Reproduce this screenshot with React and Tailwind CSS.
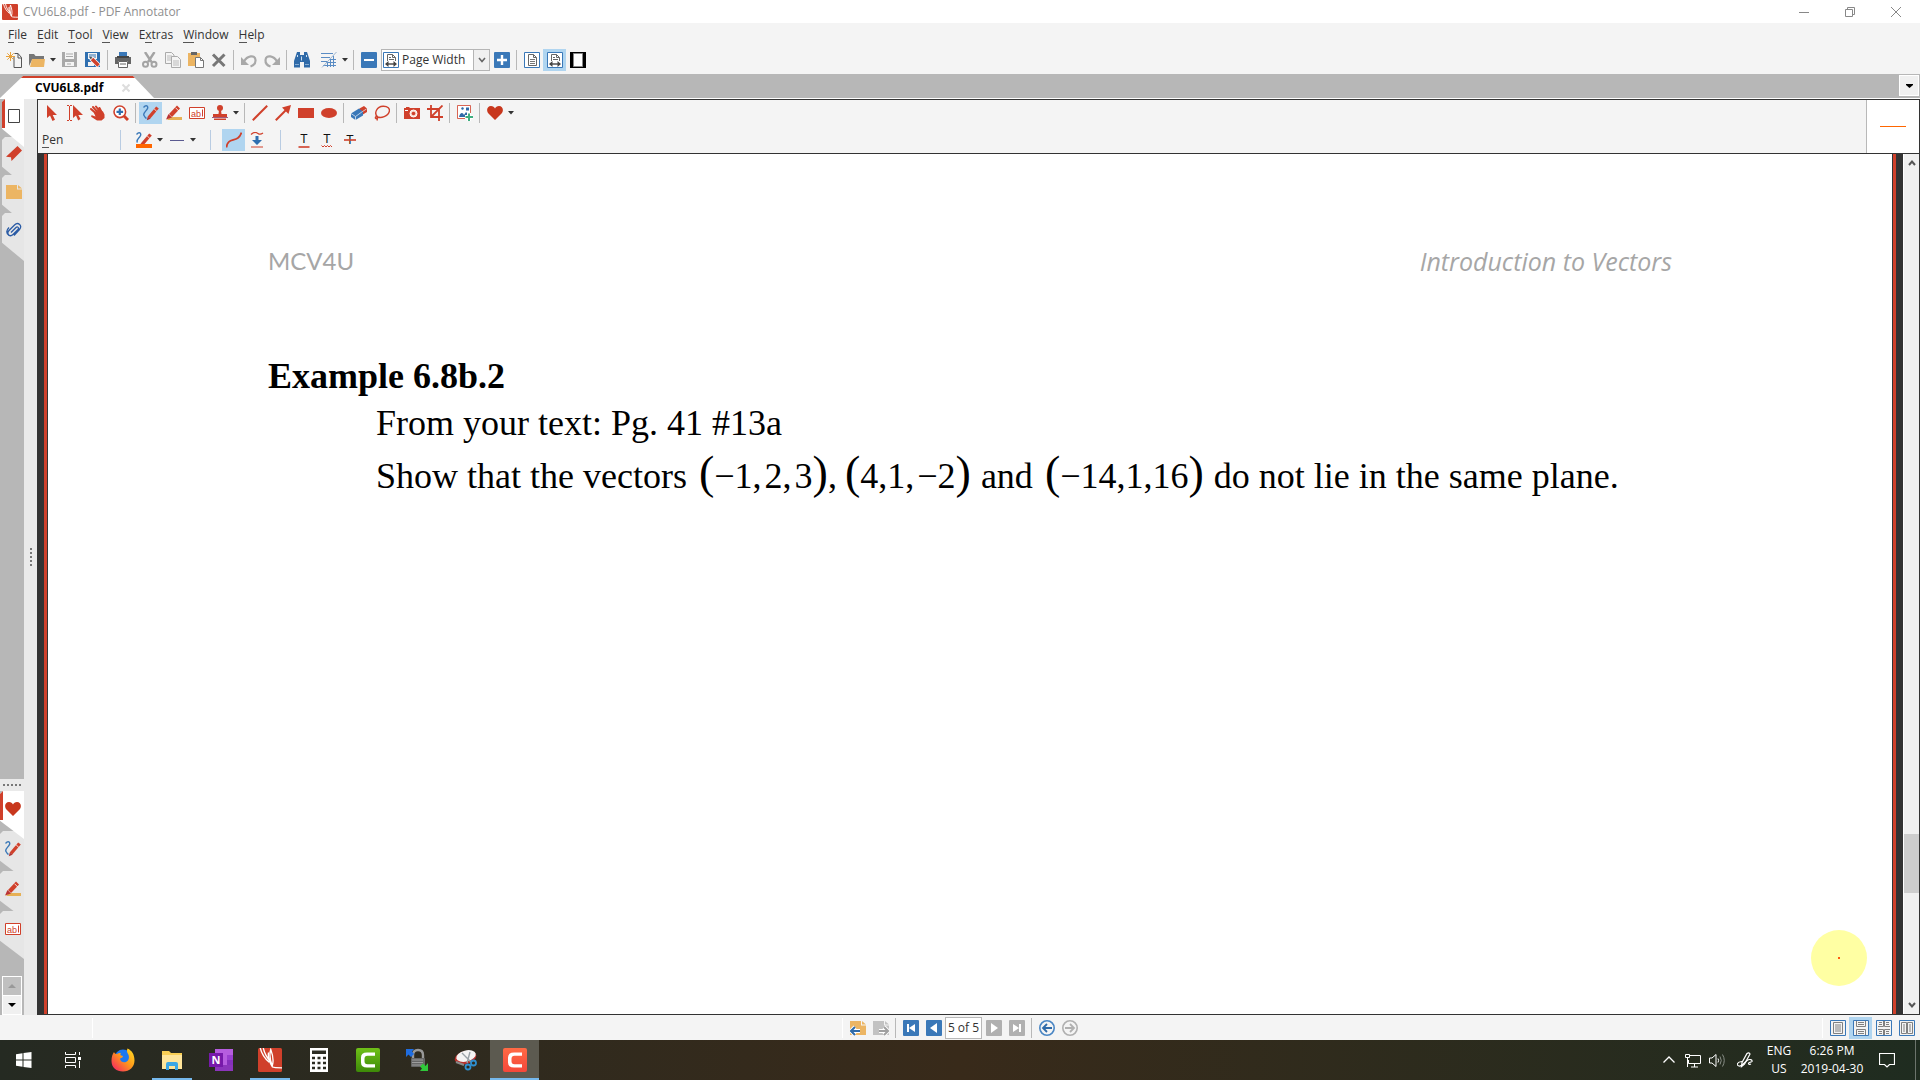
import React from "react";

const RED = "#d0402b";
const BLUE = "#3a78b8";

function Svg({ s = 16, vb = 16, children, className = "" }) {
  return (
    <svg width={s} height={s} viewBox={`0 0 ${vb} ${vb}`} fill="none" className={`shrink-0 ${className}`} aria-hidden="true">
      {children}
    </svg>
  );
}

/* ---------- icons ---------- */
const AppLogo = ({ s = 16 }) => (
  <Svg s={s}>
    <rect width="16" height="16" rx="1" fill={RED} />
    <path d="M1.500 0c1 4 3 7 6 9.500M3.500 0c1 4 2.500 6.500 4.500 8.500M8.500 1c-1 3-.5 7 1 11 1-3 .5-7-1-11zM7 3c-.5 3 1 7 2.500 9.500 1 .7 3 .7 6.500.7" stroke="#fff" strokeWidth=".9" />
  </Svg>
);
const NewDoc = () => (
  <Svg>
    <path d="M8 4.500v11h7.500V5.500L12 1.500H8.500M12 1.500V6h3.500" stroke="#555" />
    <path d="M4.500 0v9M0 4.500h9M1.300 1.300l6.400 6.400M7.700 1.300L1.300 7.700" stroke="#e9a23a" />
  </Svg>
);
const Folder = () => (
  <Svg>
    <path d="M0 14V2h5l1.500 2H15v3H3.500L0 14z" fill="#777" />
    <path d="M3 7h13l-1 8H1z" fill="#ecb563" />
  </Svg>
);
const Save = () => (
  <Svg>
    <path d="M0 0h15v15H0z" fill="#a9a9a9" />
    <path d="M3 0h9v7H3zM3 10h9v4H3z" fill="#f4f4f4" />
    <path d="M4 2h7M4 4.500h7M5 12h4" stroke="#a9a9a9" />
  </Svg>
);
const SaveAs = () => (
  <Svg>
    <path d="M0 0h15v15H0z" fill="#2f6fb0" />
    <path d="M3 1h9v6H3zM3 10h6v4H3z" fill="#f4f4f4" />
    <path d="M4 3h7M4 5h7" stroke="#2f6fb0" />
    <path d="M6 6l8 8" stroke="#fff" strokeWidth="5" />
    <path d="M7 7l6.500 6.500" stroke={RED} strokeWidth="3.500" />
    <path d="M4.500 4.500l1 3 2-2z" fill="#555" />
  </Svg>
);
const Print = () => (
  <Svg>
    <path d="M4 0h8v4H4z" fill="#3a78b8" />
    <path d="M0 5h16v7h-3V9H3v3H0z" fill="#666" />
    <path d="M2 5h12" stroke="#444" strokeWidth="2" />
    <path d="M3.500 9.500h9v6h-9z" fill="#fff" stroke="#666" />
    <path d="M5 12h6" stroke="#666" />
  </Svg>
);
const Cut = () => (
  <Svg>
    <path d="M3 0l6.500 10M12.500 0L6 10" stroke="#a3a3a3" strokeWidth="2.400" />
    <circle cx="3.500" cy="12.300" r="2.500" stroke="#a3a3a3" strokeWidth="2" />
    <circle cx="12" cy="12.300" r="2.500" stroke="#a3a3a3" strokeWidth="2" />
  </Svg>
);
const Copy = () => (
  <Svg>
    <path d="M.5.5h6L9 3v8.500H.5z" fill="#f4f4f4" stroke="#aaa" />
    <path d="M2 4h5M2 6h5M2 8h5" stroke="#bbb" />
    <path d="M6.500 4.500h6l3 3v8h-9z" fill="#f4f4f4" stroke="#aaa" />
    <path d="M8 9h6M8 11h6M8 13h6" stroke="#bbb" />
  </Svg>
);
const Paste = () => (
  <Svg>
    <path d="M0 1h12v13H0z" fill="#ecb563" />
    <path d="M3 0h6v3H3z" fill="#666" />
    <path d="M7.500 5.500h5l3 3v7h-8z" fill="#fff" stroke="#777" />
    <path d="M12.500 5.500v3h3" stroke="#777" />
  </Svg>
);
const Del = () => (
  <Svg>
    <path d="M2 2.500l11.500 11.500M13.500 2.500L2 14" stroke="#777" strokeWidth="3" />
  </Svg>
);
const Undo = () => (
  <Svg>
    <path d="M3 9.500C6 4 14 2 14.500 8c.2 3-2 5.500-5 6.500" stroke="#a8a8a8" strokeWidth="2.200" />
    <path d="M0 5v8h8z" fill="#a8a8a8" />
  </Svg>
);
const Redo = () => (
  <Svg>
    <path d="M13 9.500C10 4 2 2 1.500 8c-.2 3 2 5.500 5 6.500" stroke="#a8a8a8" strokeWidth="2.200" />
    <path d="M16 5v8H8z" fill="#a8a8a8" />
  </Svg>
);
const Binoc = () => (
  <Svg>
    <path d="M3 0h3v3h4V0h3l1 3 2 6v6.500h-6V10H6v5.500H0V9l2-6z" fill="#2f6aa8" />
    <path d="M7.500 4.500v4M3.500 3v2M12.500 3v2" stroke="#cfe0f0" />
    <path d="M1 12.500h4M11 12.500h4" stroke="#86add4" />
  </Svg>
);
const Hatch = () => (
  <Svg>
    <path d="M0 1.500h12M0 5.500h9M0 9.500h7M8 7.500h7M5 10.500h10M2 13.500h13M6.500 10v5M9.500 7v8M12.500 4v11" stroke="#5a8cc4" />
    <path d="M1 15.500L15.500 0" stroke="#9ab4d0" />
  </Svg>
);
const Minus = () => (
  <Svg>
    <rect width="16" height="16" rx="1" fill={BLUE} />
    <path d="M3 8h10" stroke="#fff" strokeWidth="2" />
  </Svg>
);
const Plus = () => (
  <Svg>
    <rect width="16" height="16" rx="1" fill={BLUE} />
    <path d="M3 8h10M8 3v10" stroke="#fff" strokeWidth="2.400" />
  </Svg>
);
const PageFit = () => (
  <Svg>
    <path d="M.5.5h15v15H.5z" fill="#fff" stroke={BLUE} />
    <path d="M4.500 2.500h5l3 3v8h-8zM9.500 2.500v3h3" stroke="#666" />
    <path d="M6 7.500h5M6 9.500h5M6 11.500h5" stroke="#777" />
  </Svg>
);
const PageW = () => (
  <Svg>
    <path d="M.5.5h15v15H.5z" fill="#fff" stroke={BLUE} />
    <path d="M4.500 9V2.500h5l3 3V9M9.500 2.500v3h3M6 5.500h2M6 7.500h5" stroke="#666" />
    <path d="M3 12h10" stroke="#444" strokeWidth="1.400" />
    <path d="M5.500 9L2 12l3.500 3zM10.500 9l3.500 3-3.500 3z" fill="#444" />
  </Svg>
);
const BlackPage = () => (
  <Svg>
    <path d="M0 0h16v16H0z" fill="#000" />
    <path d="M3.500 1.500h9v13h-9z" fill="#fff" stroke="#888" />
  </Svg>
);
const Arrow = () => (
  <Svg>
    <path d="M3 0v13l3-2.500L8.500 16l2.500-1.200L8.700 10H13z" fill={RED} />
  </Svg>
);
const TextArrow = () => (
  <Svg>
    <path d="M0 .5h2M3 .5h2M2.500 1v14M0 15.500h2M3 15.500h2" stroke={RED} />
    <path d="M6 0v13l3-2.500 2.200 5L13.500 14l-2.200-4H16z" fill={RED} />
  </Svg>
);
const Hand = () => (
  <Svg>
    <path d="M5.500 8L1 4M7 6.500L3 2M9 5.500L6 1.500M11 6l-1.500-3" stroke={RED} strokeWidth="2" strokeLinecap="round" />
    <path d="M4 8l5-4 4 2.500 1.500 3V13l-3 2.500H7L1.500 12c-1-1 0-2 1-1.500l3 1z" fill={RED} />
  </Svg>
);
const Zoom = () => (
  <Svg>
    <path d="M11 11l4 4" stroke={RED} strokeWidth="3" />
    <circle cx="6.800" cy="6.800" r="5.800" fill="#fff" stroke={RED} strokeWidth="1.600" />
    <path d="M3.500 6.800h6.600M6.800 3.500v6.600" stroke="#2f6fb0" strokeWidth="2.200" />
  </Svg>
);
const PenShape = () => (
  <>
    <path d="M6 12.500L14.500 2.500" stroke={RED} strokeWidth="3.400" />
    <path d="M11.200 4l2.500 2.200" stroke="#fff" strokeWidth=".8" />
    <path d="M3.800 15.200l1-3.800 2.800 2.300z" fill="#a33" />
  </>
);
const Pen = () => (
  <Svg>
    <PenShape />
    <path d="M.5 2.500C3-.5 5.500 1 4.500 3.500 3.500 6-.5 8 1 10.500c.8 1.500 1.500 2.500 2.500 3" stroke="#3a78b8" strokeWidth="1.400" />
  </Svg>
);
const Marker = () => (
  <Svg>
    <path d="M4 12h12v3H1z" fill="#e6b055" />
    <path d="M4.500 10.500l8-8.500" stroke={RED} strokeWidth="4.200" />
    <path d="M9.500 2.700l3.500 3.500" stroke="#fff" strokeWidth=".8" />
    <path d="M0 14.500l2.500-5.500L6 12.500z" fill="#b33" />
  </Svg>
);
const Abl = () => (
  <Svg>
    <path d="M.5 2.500h15v11H.5z" fill="#fff" stroke={RED} />
    <text x="2" y="11.500" fontSize="9" fontFamily="Liberation Sans, sans-serif" fill={RED}>ab</text>
    <path d="M13.500 4.500v7" stroke={RED} />
  </Svg>
);
const Stamp = () => (
  <Svg>
    <circle cx="8" cy="3" r="3" fill={RED} />
    <path d="M7 5h2l.5 4H15v3H1V9h5.500zM2 13.500h12V15H2z" fill={RED} />
    <path d="M0 12.500h16" stroke="#a05a7a" />
  </Svg>
);
const Line = () => (
  <Svg>
    <path d="M.8 15.200L15.200.8" stroke={RED} strokeWidth="2" />
  </Svg>
);
const LineArrow = () => (
  <Svg>
    <path d="M.8 15.200L12 4" stroke={RED} strokeWidth="2" />
    <path d="M16 0l-2.500 9L7 2.500z" fill={RED} />
  </Svg>
);
const Rect = () => (
  <Svg>
    <path d="M0 3h16v10H0z" fill={RED} />
  </Svg>
);
const Oval = () => (
  <Svg>
    <ellipse cx="8" cy="8" rx="8" ry="5" fill={RED} />
  </Svg>
);
const Eraser = () => (
  <Svg>
    <path d="M8.500 3.500L13 1l3 2.500v3.500L11 10 7 7z" fill={RED} />
    <path d="M0 8.500l8-5 4 3v4L4.500 15 0 12z" fill={BLUE} />
    <path d="M0 8.500l4.500 3 7-5M4.500 11.500V15M11.500 6.500l4-2.500" stroke="#dbe6f2" strokeWidth=".8" />
  </Svg>
);
const Lasso = () => (
  <Svg>
    <path d="M3.500 12C-.5 8 3 1.500 9 1.200c5-.2 7 2.800 6.300 5.300C14 11.500 7 13.500 3.500 12z" stroke={RED} strokeWidth="1.400" />
    <path d="M3.500 12c-2.500-.7-2.500 1-1.500 1.500 1 .4 2-.5 1.500-1.500-.5 1 0 2-.5 3.500" stroke={RED} strokeWidth="1.400" />
  </Svg>
);
const Camera = () => (
  <Svg>
    <path d="M0 3h2V2h3l1 1h10v11H0z" fill={RED} />
    <circle cx="9.500" cy="8.500" r="3.500" fill="#f8d8c8" stroke="#fff" />
    <circle cx="9.500" cy="8.500" r="1.800" fill={RED} />
    <path d="M1 5.500h3" stroke="#fff" />
  </Svg>
);
const Crop = () => (
  <Svg>
    <path d="M0 4h12v12M4 0v12h12M4.500 11.500L15.500.5" stroke={RED} strokeWidth="1.800" />
  </Svg>
);
const ImageAdd = () => (
  <Svg>
    <path d="M.5.5h13v13H.5z" fill="#fff" stroke={RED} strokeOpacity=".8" />
    <path d="M2 12c1-5 4-5 5-2l2-3 3 3v2zM4 3l2-1 1 2-2 1zM9 2.500h3v3H9z" fill="#2f6aa8" />
    <path d="M12 8v8M8 12h8" stroke="#fff" strokeWidth="4" />
    <path d="M12 8.500V16M8.500 12H16" stroke="#3fae80" strokeWidth="2" />
  </Svg>
);
const Heart = () => (
  <Svg>
    <path d="M8 15L1 8C-1 5 .5 1 4 1c2 0 3.300 1 4 2.500C8.700 2 10 1 12 1c3.500 0 5 4 3 7z" fill="#c8371d" />
  </Svg>
);
const PenColor = () => (
  <Svg>
    <PenShape />
    <path d="M.5 2.500C3-.5 5.500 1 4.500 3.500 3.500 6-.5 8 1.500 10.500" stroke="#3a78b8" strokeWidth="1.400" />
    <path d="M0 12h16v4H0z" fill="#ff6600" />
  </Svg>
);
const Dash = () => (
  <Svg>
    <path d="M1 8.500h14" stroke="#5a5a90" />
  </Svg>
);
const Curve = () => (
  <Svg>
    <path d="M.5 15.500C1.500 4 12 12 15.500.5" stroke={RED} strokeWidth="1.800" />
  </Svg>
);
const DownSnap = () => (
  <Svg>
    <path d="M2 2.500C5-.5 7 0 9 1.500c2 1.500 3 1 5-.5M2 15h12" stroke={RED} strokeWidth="1.200" />
    <path d="M6.500 4h3v4H13l-5 5-5-5h3.500z" fill="#2f6fb0" />
  </Svg>
);
const TUnder = () => (
  <Svg>
    <text x="8" y="11" textAnchor="middle" fontSize="12" fontFamily="Liberation Sans, sans-serif" fill="#111">T</text>
    <path d="M2.500 15h11" stroke={RED} strokeWidth="1.600" />
  </Svg>
);
const TWave = () => (
  <Svg>
    <text x="8" y="11" textAnchor="middle" fontSize="12" fontFamily="Liberation Sans, sans-serif" fill="#111">T</text>
    <path d="M2.500 13.500l1.500 1.500L5.500 13.500 7 15l1.500-1.500 1.500 1.500 1.500-1.500 1.500 1.500" stroke={RED} />
  </Svg>
);
const TStrike = () => (
  <Svg>
    <text x="8" y="12" textAnchor="middle" fontSize="12" fontFamily="Liberation Sans, sans-serif" fill="#111">T</text>
    <path d="M2 8h12" stroke={RED} strokeWidth="1.600" />
  </Svg>
);
const SidePage = () => (
  <Svg>
    <path d="M2.500 1.500h11v13h-11z" fill="#fff" stroke="#444" />
  </Svg>
);
const Bookmark = () => (
  <Svg>
    <path d="M11.500 0L16 4.500 5.500 15 5 11.200l-5-.5z" fill={RED} />
  </Svg>
);
const Note = () => (
  <Svg>
    <path d="M0 1h11v4.500h5V15H0zM12 1l4 3.500h-4z" fill="#ecb563" />
  </Svg>
);
const Clip = () => (
  <Svg>
    <path d="M5 10.500l5-5c1.500-1.500 3.500.5 2 2L7 12.500c-3 3-7-.5-4-4L8.500 3c3.500-3.500 8.500.5 5 4.500L8 13.500M3 13.500C-.5 11 .8 7.800 3 5.500" stroke="#2a5ba5" strokeWidth="1.300" />
  </Svg>
);
const NavBack = () => (
  <Svg>
    <path d="M0 1h11v4.500h5V15H0zM12 1l4 3.500h-4z" fill="#ecb563" />
    <path d="M0 11h10M5 7l-4 4 4 4" stroke="#fff" strokeWidth="4" />
    <path d="M1 11h9M5 7l-4 4 4 4" stroke="#2f6aa8" strokeWidth="2" />
  </Svg>
);
const NavFwd = () => (
  <Svg>
    <path d="M0 1h11v4.500h5V15H0zM12 1l4 3.500h-4z" fill="#c2c2c2" />
    <path d="M6 11h9M11 7l4 4-4 4" stroke="#fff" strokeWidth="4" />
    <path d="M6 11h9M11 7l4 4-4 4" stroke="#a0a0a0" strokeWidth="2" />
  </Svg>
);
const Sq = ({ c, d }) => (
  <Svg>
    <rect width="16" height="16" rx="1" fill={c} />
    <path d={d} fill="#fff" />
  </Svg>
);
const CircArrow = ({ c, flip, h }) => (
  <Svg className={flip ? "-scale-x-100" : ""}>
    <circle cx="8" cy="8" r="7.200" stroke={c} strokeWidth="1.600" />
    <path d="M4 8h9M8 4L4 8l4 4" stroke={h || c} strokeWidth="1.800" />
  </Svg>
);
const View = ({ d }) => (
  <Svg>
    <path d="M.5.5h15v15H.5z" fill="#f4f4f4" stroke={BLUE} />
    <path d={d} stroke="#808080" />
  </Svg>
);

/* ---------- small parts ---------- */
const ToolBtn = ({ label, on, children }) => (
  <button aria-label={label} className={`flex h-[22px] w-[23px] shrink-0 items-center justify-center ${on ? "bg-[#b0d5f0]" : ""}`}>
    {children}
  </button>
);
const Sep = ({ c = "bg-[#b8b8b8]" }) => (
  <span className="flex w-[7px] shrink-0 justify-center">
    <span className={`h-5 w-px ${c}`} />
  </span>
);
const Drop = ({ label }) => (
  <button aria-label={label} className="flex h-[22px] w-[10px] shrink-0 items-center justify-center">
    <svg width="6" height="4" viewBox="0 0 6 4" aria-hidden="true"><path d="M0 0h6L3 3.500z" fill="#333" /></svg>
  </button>
);
const Key = ({ children }) => <span className="inline-block border-b border-[#555] leading-[14px]">{children}</span>;
const Menu = ({ pre = "", k, post }) => (
  <button className="leading-4">{pre}<Key>{k}</Key>{post}</button>
);
const SideTab = ({ label, active, tall, children }) => (
  <button aria-label={label} className={`relative block w-full ${tall ? "h-10" : "h-[38px]"} ${active ? "z-10" : ""}`}>
    <span className={`absolute inset-x-0 top-0 h-12 [clip-path:polygon(3px_0,100%_0,100%_100%,0_62%,0_3px)] ${active ? "bg-white" : "bg-[#e6e6e6]"}`}>
      {active && <span className="block h-[29px] w-[3px] bg-[#d0402b]" />}
    </span>
    <span className="relative mb-1 flex h-8 items-start justify-center pt-2 pl-[2px]">{children}</span>
  </button>
);
const TaskBtn = ({ label, open, active, children }) => (
  <button aria-label={label} className={`flex h-10 flex-col items-center ${active ? "bg-[#5c5a50]" : ""}`}>
    <span className="flex flex-1 items-center">{children}</span>
    {(open || active) && <span className={`-mt-[2px] h-[2px] bg-[#76b9ed] ${active ? "w-full" : "w-10"}`} />}
  </button>
);
const P = ({ children }) => <span className="text-[46px] leading-none">{children}</span>;
const Gap = () => <span className="inline-block w-[3px]" />;

const Camtasia = ({ c1, c2, id }) => (
  <Svg s={24} vb={24}>
    <defs>
      <linearGradient id={id} x1="0" y1="0" x2="0" y2="1">
        <stop offset="0" stopColor={c1} />
        <stop offset="1" stopColor={c2} />
      </linearGradient>
    </defs>
    <rect width="24" height="24" rx="2" fill={`url(#${id})`} />
    <path d="M19 4.500H11Q5 4.500 5 9.500v5q0 5 6 5h8v-3.200h-7.500q-3 0-3-3v-2.600q0-3 3-3H19z" fill="#fff" />
  </Svg>
);

export default function App() {
  return (
    <div className="flex h-screen flex-col overflow-hidden bg-[#f4f4f4] text-[12px] text-[#333] [font-family:'Open_Sans','Noto_Sans',sans-serif]">
      {/* title bar */}
      <header className="flex h-[23px] shrink-0 items-center bg-white pr-px pl-[2px]">
        <AppLogo />
        <h1 className="flex-1 pl-[5px] text-[12px] text-[#8f8f8f]">CVU6L8.pdf - PDF Annotator</h1>
        <button aria-label="Minimize" className="flex h-full w-[46px] items-center justify-center">
          <Svg><path d="M3 8.500h10" stroke="#888" /></Svg>
        </button>
        <button aria-label="Restore" className="flex h-full w-[46px] items-center justify-center">
          <Svg><path d="M3.500 5.500h7v7h-7zM5.500 5V3.500h7v7H11" stroke="#888" /></Svg>
        </button>
        <button aria-label="Close" className="flex h-full w-[46px] items-center justify-center">
          <Svg><path d="M3 3l10 10M13 3L3 13" stroke="#888" /></Svg>
        </button>
      </header>

      {/* menu */}
      <nav className="flex h-[23px] shrink-0 items-center gap-[10px] pl-2">
        <Menu k="F" post="ile" />
        <Menu k="E" post="dit" />
        <Menu k="T" post="ool" />
        <Menu k="V" post="iew" />
        <Menu pre="E" k="x" post="tras" />
        <Menu k="W" post="indow" />
        <Menu k="H" post="elp" />
      </nav>

      {/* main toolbar */}
      <div className="flex h-7 shrink-0 items-center pl-[2px]">
        <ToolBtn label="New"><NewDoc /></ToolBtn>
        <ToolBtn label="Open"><Folder /></ToolBtn>
        <Drop label="Open recent" />
        <ToolBtn label="Save"><Save /></ToolBtn>
        <ToolBtn label="Save as"><SaveAs /></ToolBtn>
        <Sep />
        <ToolBtn label="Print"><Print /></ToolBtn>
        <span className="w-1" />
        <ToolBtn label="Cut"><Cut /></ToolBtn>
        <ToolBtn label="Copy"><Copy /></ToolBtn>
        <ToolBtn label="Paste"><Paste /></ToolBtn>
        <ToolBtn label="Delete"><Del /></ToolBtn>
        <Sep />
        <ToolBtn label="Undo"><Undo /></ToolBtn>
        <ToolBtn label="Redo"><Redo /></ToolBtn>
        <Sep />
        <ToolBtn label="Find"><Binoc /></ToolBtn>
        <span className="w-1" />
        <ToolBtn label="Grid"><Hatch /></ToolBtn>
        <Drop label="Grid options" />
        <Sep />
        <ToolBtn label="Zoom out"><Minus /></ToolBtn>
        <label className="relative ml-px flex h-[22px] w-[109px] items-center border border-[#b5b5b5] bg-white pl-px">
          <PageW />
          <select aria-label="Zoom" defaultValue="w" className="h-full flex-1 appearance-none bg-transparent pl-[3px] text-[12px] text-[#333] outline-none">
            <option value="w">Page Width</option>
          </select>
          <span className="pointer-events-none absolute inset-y-0 right-0 flex w-4 items-center justify-center border-l border-[#b5b5b5] bg-[#f0f0f0]">
            <svg width="8" height="6" viewBox="0 0 8 6" fill="none" aria-hidden="true"><path d="M1 1l3 3.500L7 1" stroke="#666" strokeWidth="1.600" /></svg>
          </span>
        </label>
        <ToolBtn label="Zoom in"><Plus /></ToolBtn>
        <Sep />
        <ToolBtn label="Full page"><PageFit /></ToolBtn>
        <ToolBtn label="Page width" on><PageW /></ToolBtn>
        <ToolBtn label="Full screen"><BlackPage /></ToolBtn>
      </div>

      {/* document tabs */}
      <div className="flex h-[25px] shrink-0 items-end justify-between border-b border-white bg-[#b7b7b7]">
        <div className="flex h-[22px] w-[154px] flex-col items-center bg-white [clip-path:polygon(0_100%,23px_0,133px_0,100%_100%)]">
          <span className="h-[2px] w-full bg-[#d0402b]" />
          <div className="flex w-full flex-1 items-center pl-[35px]">
            <button className="w-[86px] text-left text-[12px] leading-4 font-bold text-black">CVU6L8.pdf</button>
            <button aria-label="Close tab" className="flex">
              <Svg s={10} vb={10}><path d="M1.500 1.500l7 7M8.500 1.500l-7 7" stroke="#ddd" strokeWidth="2" /></Svg>
            </button>
          </div>
        </div>
        <button aria-label="Tab list" className="mr-px mb-[2px] flex h-[21px] w-5 items-center justify-center border border-white bg-[#f0f0f0]">
          <svg width="7" height="4" viewBox="0 0 7 4" aria-hidden="true"><path d="M0 0h7v1L3.500 4 0 1z" fill="#000" /></svg>
        </button>
      </div>

      {/* body */}
      <div className="flex min-h-0 flex-1 bg-[#eaeaea]">
        <aside className="flex w-6 shrink-0 flex-col">
          <div className="flex-1 bg-[#b7b7b7] pl-[2px]">
            <SideTab label="Pages" active><SidePage /></SideTab>
            <SideTab label="Bookmarks"><Bookmark /></SideTab>
            <SideTab label="Notes"><Note /></SideTab>
            <SideTab label="Attachments"><Clip /></SideTab>
          </div>
          <div className="flex h-3 items-center justify-center gap-[2px]">
            {[0, 1, 2, 3, 4].map((i) => <span key={i} className="size-[2px] bg-[#777]" />)}
          </div>
          <div className="flex h-[224px] flex-col bg-[#b7b7b7]">
            <SideTab label="Favorites" active tall><Heart /></SideTab>
            <SideTab label="Pens" tall><Pen /></SideTab>
            <SideTab label="Markers" tall><Marker /></SideTab>
            <SideTab label="Text" tall><Abl /></SideTab>
            <div className="mt-auto px-[2px]">
              <button aria-label="Scroll up" className="flex h-5 w-full items-center justify-center border border-white bg-[#c0c0c0]">
                <svg width="8" height="4" viewBox="0 0 8 4" aria-hidden="true"><path d="M0 4h8L4 0z" fill="#999" /></svg>
              </button>
              <button aria-label="Scroll down" className="flex h-[19px] w-full items-center justify-center border border-t-0 border-white bg-[#f0f0f0]">
                <svg width="8" height="4" viewBox="0 0 8 4" aria-hidden="true"><path d="M0 0h8L4 4z" fill="#000" /></svg>
              </button>
            </div>
          </div>
        </aside>
        <div className="flex w-[13px] shrink-0 flex-col items-center justify-center gap-[2px]">
          {[0, 1, 2, 3, 4].map((i) => <span key={i} className="size-[2px] bg-[#777]" />)}
        </div>

        <main className="flex min-w-0 flex-1 flex-col border border-[#333]">
          <div className="flex h-[54px] shrink-0 border-b border-[#333] bg-[#f4f4f4]">
            <div className="flex-1">
              <div className="flex h-[26px] items-center pl-[2px]">
                <ToolBtn label="Select"><Arrow /></ToolBtn>
                <ToolBtn label="Select text"><TextArrow /></ToolBtn>
                <ToolBtn label="Pan"><Hand /></ToolBtn>
                <ToolBtn label="Magnify"><Zoom /></ToolBtn>
                <Sep />
                <ToolBtn label="Pen" on><Pen /></ToolBtn>
                <ToolBtn label="Marker"><Marker /></ToolBtn>
                <ToolBtn label="Text"><Abl /></ToolBtn>
                <ToolBtn label="Stamp"><Stamp /></ToolBtn>
                <Drop label="Stamp options" />
                <Sep />
                <ToolBtn label="Line"><Line /></ToolBtn>
                <ToolBtn label="Arrow"><LineArrow /></ToolBtn>
                <ToolBtn label="Rectangle"><Rect /></ToolBtn>
                <ToolBtn label="Ellipse"><Oval /></ToolBtn>
                <Sep />
                <ToolBtn label="Eraser"><Eraser /></ToolBtn>
                <ToolBtn label="Lasso"><Lasso /></ToolBtn>
                <Sep />
                <ToolBtn label="Snapshot"><Camera /></ToolBtn>
                <ToolBtn label="Crop"><Crop /></ToolBtn>
                <Sep />
                <ToolBtn label="Insert image"><ImageAdd /></ToolBtn>
                <Sep />
                <ToolBtn label="Favorites"><Heart /></ToolBtn>
                <Drop label="Favorites options" />
              </div>
              <div className="flex h-[27px] items-center">
                <button className="w-[79px] pl-1 text-left leading-4"><Key>P</Key>en</button>
                <Sep c="bg-[#b9cce2]" />
                <span className="w-2" />
                <ToolBtn label="Pen color"><PenColor /></ToolBtn>
                <Drop label="Color options" />
                <ToolBtn label="Line style"><Dash /></ToolBtn>
                <Drop label="Line options" />
                <span className="w-[9px]" />
                <Sep c="bg-[#b9cce2]" />
                <span className="w-2" />
                <ToolBtn label="Smooth" on><Curve /></ToolBtn>
                <ToolBtn label="Snap"><DownSnap /></ToolBtn>
                <span className="w-[9px]" />
                <Sep c="bg-[#b9cce2]" />
                <span className="w-2" />
                <ToolBtn label="Underline"><TUnder /></ToolBtn>
                <ToolBtn label="Squiggle"><TWave /></ToolBtn>
                <ToolBtn label="Strike out"><TStrike /></ToolBtn>
              </div>
            </div>
            <div className="flex w-[53px] items-center justify-center border-l border-[#b8b8b8] bg-white">
              <span className="h-px w-[26px] bg-[#ff6600]" />
            </div>
          </div>

          <div className="flex min-h-0 flex-1 bg-[#333]">
            <div className="mr-[7px] ml-[6px] flex min-w-0 flex-1 bg-[#d0402b] px-[3px]">
              <article className="relative min-w-0 flex-1 border-x border-[#333] bg-white pt-[89px] pr-[220px] pl-[220px]">
                <div className="flex justify-between leading-9 text-[#a6a6a6]">
                  <span className="text-[24px] [font-family:Lato,sans-serif]">MCV4U</span>
                  <span className="text-[25px] italic">Introduction to Vectors</span>
                </div>
                <div className="mt-[73px] whitespace-nowrap text-black [font-family:'Liberation_Serif',serif]">
                  <h2 className="text-[36px] leading-[48px] font-bold">Example 6.8b.2</h2>
                  <div className="pl-[108px] text-[36px]">
                    <p className="leading-[46px]">From your text: Pg. 41 #13a</p>
                    <p className="flex items-baseline leading-[60px]">
                      <span>Show that the vectors</span>
                      <span className="ml-3"><P>(</P>−1,<Gap />2,<Gap />3<P>)</P>,</span>
                      <span className="ml-2"><P>(</P>4,1,<Gap />−2<P>)</P></span>
                      <span className="ml-[10px]">and</span>
                      <span className="ml-3"><P>(</P>−14,1,16<P>)</P></span>
                      <span className="ml-[10px]">do not lie in the same plane.</span>
                    </p>
                  </div>
                </div>
                <div className="absolute right-[25px] bottom-[28px] flex size-14 items-center justify-center rounded-full bg-[#ffffa3]">
                  <span className="size-[2px] bg-[#ff5a10]" />
                </div>
              </article>
            </div>
            <div className="flex w-4 flex-col items-center border-l border-white bg-[#f0f0f0] py-[5px]">
              <svg width="8" height="8" viewBox="0 0 8 8" fill="none" aria-hidden="true"><path d="M1 6l3-3.500L7 6" stroke="#555" strokeWidth="2" /></svg>
              <span className="flex-1" />
              <span className="mb-[108px] h-[59px] w-full bg-[#cdcdcd]" />
              <svg width="8" height="8" viewBox="0 0 8 8" fill="none" aria-hidden="true"><path d="M1 2l3 3.500L7 2" stroke="#555" strokeWidth="2" /></svg>
            </div>
          </div>
        </main>
      </div>

      {/* status bar */}
      <footer className="grid h-[25px] shrink-0 grid-cols-[1fr_auto_1fr] items-center">
        <span className="ml-[92px] h-5 w-px bg-white" />
        <div className="flex items-center">
          <Sep c="bg-white" />
          <ToolBtn label="Previous document"><NavBack /></ToolBtn>
          <ToolBtn label="Next document"><NavFwd /></ToolBtn>
          <Sep />
          <ToolBtn label="First page"><Sq c={BLUE} d="M4 4h2v8H4zM12 4v8L6 8z" /></ToolBtn>
          <ToolBtn label="Previous page"><Sq c={BLUE} d="M11 3v10L4 8z" /></ToolBtn>
          <input aria-label="Page" defaultValue="5 of 5" className="h-[22px] w-[37px] border border-[#b8b8b8] bg-white text-center text-[12px] outline-none" />
          <ToolBtn label="Next page"><Sq c="#b0b0b0" d="M5 3v10l7-5z" /></ToolBtn>
          <ToolBtn label="Last page"><Sq c="#b0b0b0" d="M10 4h2v8h-2zM4 4v8l6-4z" /></ToolBtn>
          <Sep />
          <ToolBtn label="Back"><CircArrow c="#4a86c4" h="#2f6aa8" /></ToolBtn>
          <ToolBtn label="Forward"><CircArrow c="#b0b0b0" flip /></ToolBtn>
        </div>
        <div className="flex items-center justify-end pr-[2px]">
          <Sep c="bg-white" />
          <ToolBtn label="Single page"><View d="M3.500 2.500h9v11h-9zM5 5h6M5 7h6M5 9h6M5 11h6" /></ToolBtn>
          <ToolBtn label="Continuous" on><View d="M3.500 1v5.500h9V1M5 2.500h6M5 4.500h6M3.500 15V9.500h9V15M5 11.500h6M5 13.500h6" /></ToolBtn>
          <ToolBtn label="Two pages continuous"><View d="M2 6.500h5.500V1M14 6.500H8.500V1M3 2.500h3M10 2.500h3M3 4.500h3M10 4.500h3M2 9.500h5.500V15M14 9.500H8.500V15M3 11.500h3M10 11.500h3M3 13.500h3M10 13.500h3" /></ToolBtn>
          <ToolBtn label="Two pages"><View d="M2.500 2.500h5v11h-5zM8.500 2.500h5v11h-5zM4 5h2M4 7h2M4 9h2M4 11h2M10 5h2M10 7h2M10 9h2M10 11h2" /></ToolBtn>
        </div>
      </footer>

      {/* taskbar */}
      <div className="flex h-10 shrink-0 items-center bg-linear-to-r from-[#252a22] via-[#382a1a] to-[#1f2c20] text-white">
        <button aria-label="Start" className="flex h-10 w-12 items-center justify-center">
          <Svg><path d="M0 2.300l6.500-1v6.200H0zM7.500 1.100L15.500 0v7.500h-8zM0 8.500h6.500v6.200l-6.500-1zM7.500 8.500h8V16l-8-1.100z" fill="#fff" /></Svg>
        </button>
        <button aria-label="Task view" className="flex h-10 w-[50px] items-center justify-center">
          <Svg><path d="M.5 0v2.500h10V0M.5 5.500h10v5H.5zM.5 16v-2.500h10V16M14.500 0v3M14.500 9v7" stroke="#fff" /><path d="M13 5h3v3h-3z" fill="#fff" /></Svg>
        </button>
        <div className="grid w-[441px] grid-cols-9">
          <TaskBtn label="Firefox">
            <Svg s={24} vb={24}>
              <defs>
                <linearGradient id="ff" x1="1" y1="0" x2="0" y2="1">
                  <stop offset="0" stopColor="#ffe226" /><stop offset=".45" stopColor="#ff9a1a" /><stop offset="1" stopColor="#f5156c" />
                </linearGradient>
              </defs>
              <circle cx="12" cy="10" r="8.500" fill="#1e78f0" />
              <path d="M3 4c.5 1.500 1.500 2 3 2C8 4.500 10 5 10 5c-1 1.500-1 2.500 2 3-.5 2-2 2-3 2.500 0 3 3 4.500 6 3.500 3.500-1.500 3.500-6 2-8-1-1.500-1.500-3.500-.5-5.500 4.500 2 7 6 7 12 0 6.500-5 11-11.500 11S.5 19.500.5 13C.5 9 1.500 6 3 4z" fill="url(#ff)" />
            </Svg>
          </TaskBtn>
          <TaskBtn label="File Explorer" open>
            <Svg s={22} vb={22}>
              <path d="M1 2h7l2 2h11v15H1z" fill="#f9cf55" /><path d="M1 6h20v14H1z" fill="#ffe59a" />
              <path d="M5 21v-6q0-2 2-2h8q2 0 2 2v6h-3v-4H8v4z" fill="#3ba7e5" />
            </Svg>
          </TaskBtn>
          <TaskBtn label="OneNote">
            <Svg s={24} vb={24}>
              <path d="M6 1h18v22H6z" fill="#b65ddf" /><path d="M18 7h6v5h-6z" fill="#9a3fd0" /><path d="M18 12h6v5h-6z" fill="#8630bd" /><path d="M6 17h18v6H6z" fill="#7520a8" fillOpacity=".65" />
              <path d="M0 5h14v14H0z" fill="#7719aa" />
              <text x="7" y="16" textAnchor="middle" fontSize="11" fontWeight="bold" fontFamily="Open Sans, sans-serif" fill="#fff">N</text>
            </Svg>
          </TaskBtn>
          <TaskBtn label="PDF Annotator" open>
            <AppLogo s={24} />
          </TaskBtn>
          <TaskBtn label="Calculator">
            <Svg s={24} vb={24}>
              <path d="M3 0h18v24H3z" fill="#fff" />
              <path d="M5 2.500h14v3.500H5z" fill="#2c2c22" />
              <path d="M5 10h3M10.500 10h3M16 10h3M5 15h3M10.500 15h3M16 15h3M5 20h3M10.500 20h3M16 20h3" stroke="#2c2c22" strokeWidth="2.400" />
            </Svg>
          </TaskBtn>
          <TaskBtn label="Camtasia"><Camtasia id="cg" c1="#6fc018" c2="#3d8a08" /></TaskBtn>
          <TaskBtn label="Secure sync">
            <Svg s={24} vb={24}>
              <path d="M8 12V7q0-5 5-5t5 5v5" stroke="#999" strokeWidth="2.400" />
              <rect x="6" y="10" width="14" height="9" rx="1" fill="#666" /><path d="M7 12h11M7 14.500h11M7 17h11" stroke="#9c9c9c" />
              <path d="M1 1h8L7 3.500 9 6 6 9 3.500 6.500 1 9z" fill="#1f6de0" />
              <path d="M23 23h-8l2-2.500-2-2 3-3 2.500 2.500L23 15z" fill="#2fc83a" />
            </Svg>
          </TaskBtn>
          <TaskBtn label="Snipping Tool">
            <Svg s={24} vb={24}>
              <ellipse cx="11.500" cy="9.500" rx="11" ry="6.500" transform="rotate(-14 11.500 9.500)" fill="#b8302c" />
              <ellipse cx="12" cy="8" rx="10" ry="5.500" transform="rotate(-14 12 8)" fill="#f4f4f4" />
              <path d="M2 14l8 3" stroke="#888" strokeWidth="2" />
              <path d="M8 5l9 9M16 4l-3 11" stroke="#9aa2a8" strokeWidth="1.400" />
              <circle cx="14" cy="19" r="2.500" stroke="#2f8fd0" strokeWidth="1.800" /><circle cx="19.500" cy="15" r="2.500" stroke="#2f8fd0" strokeWidth="1.800" />
            </Svg>
          </TaskBtn>
          <TaskBtn label="Camtasia Recorder" active><Camtasia id="cr" c1="#ff6a45" c2="#f5473a" /></TaskBtn>
        </div>
        <div className="ml-auto flex h-full items-center text-center text-[12px] leading-[18px]">
          <button aria-label="Hidden icons" className="flex w-6 justify-center"><Svg><path d="M2.500 10.500L8 5l5.500 5.500" stroke="#fff" strokeWidth="1.300" /></Svg></button>
          <button aria-label="Network" className="flex w-6 justify-center"><Svg><path d="M5 3.500h10.500v8H3.500V8M9.500 12v3M6 15h7" stroke="#fff" /><path d="M.5 2.500h4v3h-4zM2.500 6v9" stroke="#fff" /></Svg></button>
          <button aria-label="Volume" className="flex w-6 justify-center"><Svg><path d="M.5 6v5h2.500l4 3.500v-12L3 6z" stroke="#fff" /><path d="M9 6.500q1.200 2 0 4" stroke="#fff" /><path d="M11 4.500q2.500 4 0 8M13.500 2.500q3.500 6 0 12" stroke="#8a8f88" /></Svg></button>
          <button aria-label="Pen workspace" className="flex w-8 justify-center"><Svg><path d="M4.500 14.500l.5-4L10 1.500q2-1.500 3 .5L7.500 12z" stroke="#fff" strokeWidth="1.200" /><path d="M5 9.500c-5 .5-6 3.500-3 4.500 3 .5 5-3 8-5.500 3-2 5.500-.5 5 1-.5 1-3.500 0-3.500 2 0 1 1.500 1 2.500.5" stroke="#fff" strokeWidth="1.200" /></Svg></button>
          <button className="w-9">ENG<br />US</button>
          <button className="w-[70px] whitespace-nowrap">6:26 PM<br />2019-04-30</button>
          <button aria-label="Notifications" className="flex w-10 justify-center"><Svg><path d="M.5 1.500h15v11h-5L8 15l-2.500-2.500h-5z" stroke="#fff" strokeWidth="1.200" /></Svg></button>
          <button aria-label="Show desktop" className="ml-2 h-full w-[5px] border-l border-[#6c746c]" />
        </div>
      </div>
    </div>
  );
}
